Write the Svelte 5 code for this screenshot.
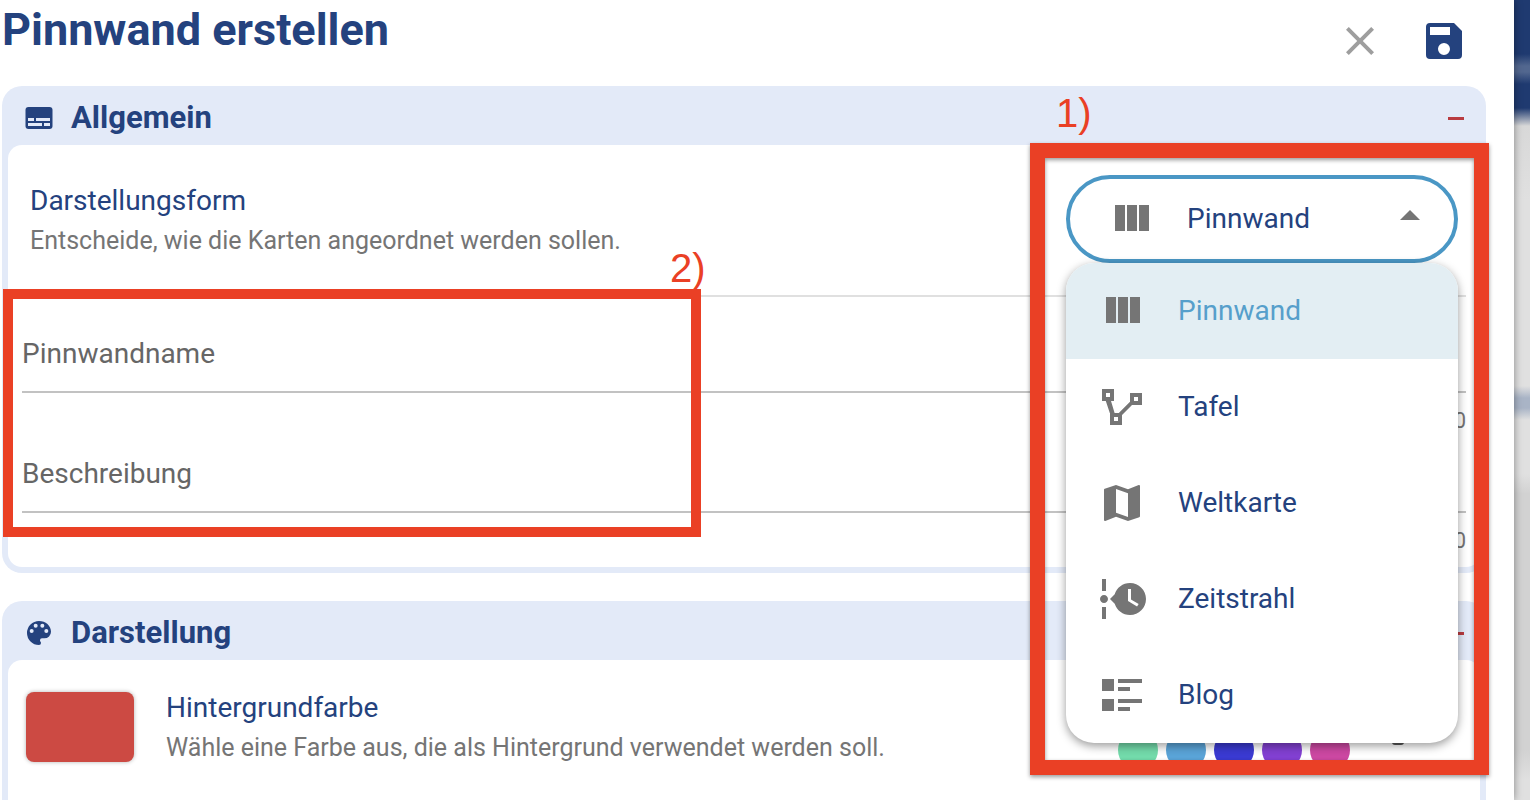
<script lang="ts">
	const forms = [
		{
			name: 'Pinnwand',
			icon: 'M16 5V18H21V5M4 18H9V5H4M10 18H15V5H10V18Z'
		},
		{
			name: 'Tafel',
			icon: 'M2 3V9H3.9L5.9 15H6V21H12V16L17 11H22V5H16V9.4L10.4 15H8.3L6.5 9H8V3ZM4 5H6V7H4ZM18 7H20V9H18ZM8 17H10V19H8Z'
		},
		{
			name: 'Weltkarte',
			icon: 'M15 19L9 16.89V5L15 7.11M20.5 3L20.34 3L15 5.1L9 3L3.36 4.9C3.15 4.97 3 5.15 3 5.38V20.5A.5.5 0 0 0 3.5 21L3.66 20.97L9 18.9L15 21L20.64 19.1C20.85 19 21 18.85 21 18.62V3.5A.5.5 0 0 0 20.5 3Z'
		},
		{
			name: 'Zeitstrahl',
			icon: 'M4 2V8H2V2H4M2 22V16H4V22H2M5 12C5 13.11 4.11 14 3 14C1.9 14 1 13.11 1 12C1 10.9 1.9 10 3 10C4.11 10 5 10.9 5 12M16 4C20.42 4 24 7.58 24 12C24 16.42 20.42 20 16 20C12.4 20 9.36 17.62 8.35 14.35L6 12L8.35 9.65C9.36 6.38 12.4 4 16 4M15 13L19.53 15.79L20.33 14.5L16.5 12.2V7H15V13Z'
		},
		{
			name: 'Blog',
			icon: 'M2 4H8V10H2ZM10 4H22V6H10ZM10 8H16V10H10ZM2 14H8V20H2ZM10 14H22V16H10ZM10 18H16V20H10Z'
		}
	];

	const colors = [
		{ name: 'Grün', value: '#73dbab' },
		{ name: 'Hellblau', value: '#5aa4d8' },
		{ name: 'Blau', value: '#3a3ad2' },
		{ name: 'Violett', value: '#8240d2' },
		{ name: 'Pink', value: '#cc48a2' }
	];

	let selected = $state('Pinnwand');
	let open = $state(true);
	let boardName = $state('');
	let description = $state('');
	let color = $state('');

	let current = $derived(forms.find((f) => f.name === selected) ?? forms[0]);

	function choose(name: string) {
		selected = name;
		open = false;
	}
</script>

<div class="screen">
	<main class="dialog">
		<header class="dialog-header">
			<h1>Pinnwand erstellen</h1>
			<div class="actions">
				<button class="icon-button" aria-label="Schließen">
					<svg class="icon" viewBox="0 0 24 24" fill="#9e9e9e">
						<path d="M19 6.4L17.6 5L12 10.6L6.4 5L5 6.4L10.6 12L5 17.6L6.4 19L12 13.4L17.6 19L19 17.6L13.4 12Z" />
					</svg>
				</button>
				<button class="icon-button" aria-label="Speichern">
					<svg class="icon" viewBox="0 0 24 24" fill="#24427e">
						<path d="M15 9H5V5h10m-3 14a3 3 0 0 1-3-3 3 3 0 0 1 3-3 3 3 0 0 1 3 3 3 3 0 0 1-3 3m5-16H5a2 2 0 0 0-2 2v14a2 2 0 0 0 2 2h14a2 2 0 0 0 2-2V7l-4-4Z" />
					</svg>
				</button>
			</div>
		</header>

		<section class="panel">
			<div class="panel-header">
				<svg class="panel-icon" viewBox="0 0 28 28">
					<rect x="0.5" y="3" width="27" height="22" rx="3" fill="#24427e" />
					<path d="M3 14h6v3H3zM11 14h14v3H11zM3 19h14v3H3zM19 19h6v3h-6z" fill="#e3eaf8" />
				</svg>
				<h2>Allgemein</h2>
				<button class="collapse" aria-label="Allgemein einklappen"></button>
			</div>
			<div class="panel-body">
				<div class="setting">
					<div class="setting-text">
						<label class="label" for="form">Darstellungsform</label>
						<p class="caption">Entscheide, wie die Karten angeordnet werden sollen.</p>
					</div>
					<div class="picker">
						<div class="pill">
							<svg class="icon grey" viewBox="0 0 24 24"><path fill-rule="evenodd" d={current.icon} /></svg>
							<select id="form" bind:value={selected}>
								{#each forms as form}
									<option>{form.name}</option>
								{/each}
							</select>
							<button class="arrow" class:open aria-label="Auswahl öffnen" onclick={() => (open = !open)}></button>
						</div>
						{#if open}
							<div class="menu">
								{#each forms as form}
									<button class="menu-item" class:active={form.name === selected} onclick={() => choose(form.name)}>
										<svg class="icon grey" viewBox="0 0 24 24"><path fill-rule="evenodd" d={form.icon} /></svg>
										{form.name}
									</button>
								{/each}
							</div>
						{/if}
						<div class="frame frame-one"></div>
						<span class="mark mark-one">1)</span>
					</div>
				</div>

				<div class="fields">
					<div class="field">
						<label for="name">{boardName ? '' : 'Pinnwandname'}</label>
						<input id="name" type="text" bind:value={boardName} />
						<span class="counter">{boardName.length}</span>
					</div>
					<div class="field">
						<label for="description">{description ? '' : 'Beschreibung'}</label>
						<input id="description" type="text" bind:value={description} />
						<span class="counter">{description.length}</span>
					</div>
					<div class="frame frame-two"></div>
					<span class="mark mark-two">2)</span>
				</div>
			</div>
		</section>

		<section class="panel">
			<div class="panel-header">
				<svg class="panel-icon" viewBox="1.5 1.5 21 21" fill="#24427e">
					<path d="M17.5 12A1.5 1.5 0 0 1 16 10.5 1.5 1.5 0 0 1 17.5 9a1.5 1.5 0 0 1 1.5 1.5 1.5 1.5 0 0 1-1.5 1.5m-3-4A1.5 1.5 0 0 1 13 6.5 1.5 1.5 0 0 1 14.5 5 1.5 1.5 0 0 1 16 6.5 1.5 1.5 0 0 1 14.5 8m-5 0A1.5 1.5 0 0 1 8 6.5 1.5 1.5 0 0 1 9.5 5 1.5 1.5 0 0 1 11 6.5 1.5 1.5 0 0 1 9.5 8m-3 4A1.5 1.5 0 0 1 5 10.5 1.5 1.5 0 0 1 6.5 9 1.5 1.5 0 0 1 8 10.5 1.5 1.5 0 0 1 6.5 12M12 3a9 9 0 0 0-9 9 9 9 0 0 0 9 9 1.5 1.5 0 0 0 1.5-1.5c0-.39-.15-.74-.39-1-.23-.27-.38-.62-.38-1a1.5 1.5 0 0 1 1.5-1.5H16a5 5 0 0 0 5-5c0-4.42-4.03-8-9-8Z" />
				</svg>
				<h2>Darstellung</h2>
				<button class="collapse" aria-label="Darstellung einklappen"></button>
			</div>
			<div class="panel-body">
				<div class="background-setting">
					<button class="swatch" aria-label="Aktuelle Hintergrundfarbe"></button>
					<div>
						<h3 class="label">Hintergrundfarbe</h3>
						<p class="caption">Wähle eine Farbe aus, die als Hintergrund verwendet werden soll.</p>
					</div>
					<div class="colors">
						{#each colors as c}
							<input type="radio" name="color" aria-label={c.name} value={c.value} bind:group={color} style="background: {c.value}" />
						{/each}
						<svg class="more" viewBox="0 0 12 32" fill="#555">
							<rect width="12" height="15" rx="3" />
						</svg>
					</div>
				</div>
			</div>
		</section>
	</main>
	<aside class="backdrop"></aside>
</div>

<style>
	:global(body) {
		margin: 0;
		font-family: Roboto, 'Liberation Sans', sans-serif;
	}

	.screen {
		display: grid;
		grid-template-columns: 1fr 16px;
		height: 100vh;
		overflow: hidden;
	}

	.dialog {
		position: relative;
		z-index: 1;
		min-height: 100vh;
		padding: 0 28px 0 2px;
		background: #fff;
		box-shadow: 0 0 8px rgba(0, 0, 0, 0.4);
	}

	.backdrop {
		background: linear-gradient(
			#1f3a70 0,
			#1f3a70 54px,
			#52678f 66px,
			#52678f 72px,
			#1f3a70 84px,
			#1f3a70 108px,
			#d8d8d8 126px,
			#e0e0e0 200px,
			#e0e0e0 386px,
			#a9b4c6 398px,
			#a9b4c6 408px,
			#e0e0e0 420px,
			#e0e0e0 474px,
			#d2d2d2 494px,
			#d2d2d2 750px,
			#e0e0e0 780px
		);
	}

	h1,
	h2,
	h3,
	p {
		margin: 0;
	}

	button {
		padding: 0;
		border: none;
		background: none;
		font: inherit;
		cursor: pointer;
	}

	.dialog-header {
		display: flex;
		justify-content: space-between;
		padding-right: 18px;
	}

	h1 {
		color: #24427e;
		font-size: 45px;
		font-weight: 700;
		line-height: 60px;
	}

	.actions {
		display: flex;
		gap: 36px;
		padding: 17px 0 21px;
	}

	.icon-button {
		height: 48px;
	}

	.icon {
		display: block;
		flex: none;
		width: 48px;
		height: 48px;
	}

	.grey {
		fill: #757575;
	}

	.panel {
		margin-bottom: 28px;
		padding: 0 6px 6px;
		border-radius: 20px;
		background: #e3eaf8;
	}

	.panel-header {
		display: flex;
		align-items: center;
		gap: 18px;
		height: 59px;
		padding: 5px 16px 0 17px;
		box-sizing: border-box;
	}

	.panel-icon {
		width: 28px;
		height: 28px;
	}

	h2 {
		flex: 1;
		color: #24427e;
		font-size: 31px;
		font-weight: 700;
		line-height: 40px;
	}

	.collapse {
		width: 16px;
		height: 3px;
		background: #b93b40;
	}

	.panel-body {
		padding: 0 14px;
		border-radius: 14px;
		background: #fff;
	}

	.setting {
		display: flex;
		align-items: center;
		justify-content: space-between;
		padding: 30px 8px 32px;
		border-bottom: 2px solid #e0e0e0;
	}

	.setting-text {
		padding-top: 4px;
	}

	.label {
		display: block;
		color: #24427e;
		font-size: 28px;
		font-weight: 400;
		line-height: 40px;
	}

	.caption {
		color: #757575;
		font-size: 25px;
		line-height: 40px;
	}

	.picker {
		position: relative;
		z-index: 2;
		width: 392px;
	}

	.pill {
		display: flex;
		align-items: center;
		gap: 32px;
		height: 88px;
		box-sizing: border-box;
		padding: 0 34px 0 37px;
		border: 4px solid #4a97c5;
		border-radius: 44px;
		background: #fff;
	}

	select {
		flex: 1;
		min-width: 0;
		appearance: none;
		border: none;
		background: none;
		color: #24427e;
		font: inherit;
		font-size: 28px;
		line-height: 40px;
	}

	.arrow {
		width: 0;
		height: 0;
		border: 10px solid transparent;
		border-top-color: #757575;
		border-bottom-width: 0;
	}

	.arrow.open {
		margin-bottom: 8px;
		border-width: 0 10px 10px;
		border-bottom-color: #757575;
	}

	.menu {
		position: absolute;
		top: 88px;
		right: 0;
		left: 0;
		overflow: hidden;
		border-radius: 28px;
		background: #fff;
		box-shadow: 0 3px 10px rgba(0, 0, 0, 0.4);
	}

	.menu-item {
		display: flex;
		align-items: center;
		gap: 32px;
		width: 100%;
		height: 96px;
		padding: 0 32px;
		color: #24427e;
		font-size: 28px;
		line-height: 40px;
	}

	.menu-item.active {
		background: #e3eef3;
		color: #569fcb;
	}

	.frame {
		position: absolute;
		box-sizing: border-box;
		pointer-events: none;
	}

	.frame-one {
		top: -32px;
		right: -31px;
		left: -36px;
		height: 632px;
		border: 15px solid #ea4025;
		filter: drop-shadow(0 2px 2px rgba(0, 0, 0, 0.4));
	}

	.frame-two {
		top: -8px;
		left: -19px;
		width: 698px;
		height: 248px;
		border: 10px solid #ea4025;
	}

	.mark {
		position: absolute;
		color: #ea4025;
		font-family: 'Liberation Sans', sans-serif;
		font-size: 40px;
		line-height: 40px;
	}

	.mark-one {
		top: -82px;
		left: -10px;
	}

	.mark-two {
		top: -49px;
		left: 648px;
	}

	.fields {
		position: relative;
		padding: 18px 0 12px;
	}

	.field {
		display: grid;
		grid-template-rows: 78px 42px;
	}

	.field label,
	.field input {
		grid-area: 1 / 1;
		font-size: 28px;
	}

	.field label {
		align-self: center;
		color: #666;
		line-height: 40px;
	}

	.field input {
		padding: 0;
		border: none;
		border-bottom: 2px solid #c2c2c2;
		background: none;
		font-family: inherit;
	}

	.counter {
		padding-top: 14px;
		color: #757575;
		font-size: 22px;
		line-height: 28px;
		text-align: right;
	}

	.background-setting {
		display: flex;
		align-items: flex-start;
		gap: 32px;
		padding: 28px 4px 80px;
	}

	.swatch {
		width: 108px;
		height: 70px;
		margin-top: 4px;
		border-radius: 8px;
		background: #cc4a43;
		box-shadow: 0 0 4px rgba(0, 0, 0, 0.3);
	}

	.colors {
		display: flex;
		gap: 8px;
		margin-left: auto;
		padding: 42px 58px 0 0;
	}

	.colors input {
		width: 40px;
		height: 40px;
		margin: 0;
		appearance: none;
		border-radius: 50%;
	}

	.more {
		width: 12px;
		height: 32px;
		margin-left: 34px;
	}
</style>
